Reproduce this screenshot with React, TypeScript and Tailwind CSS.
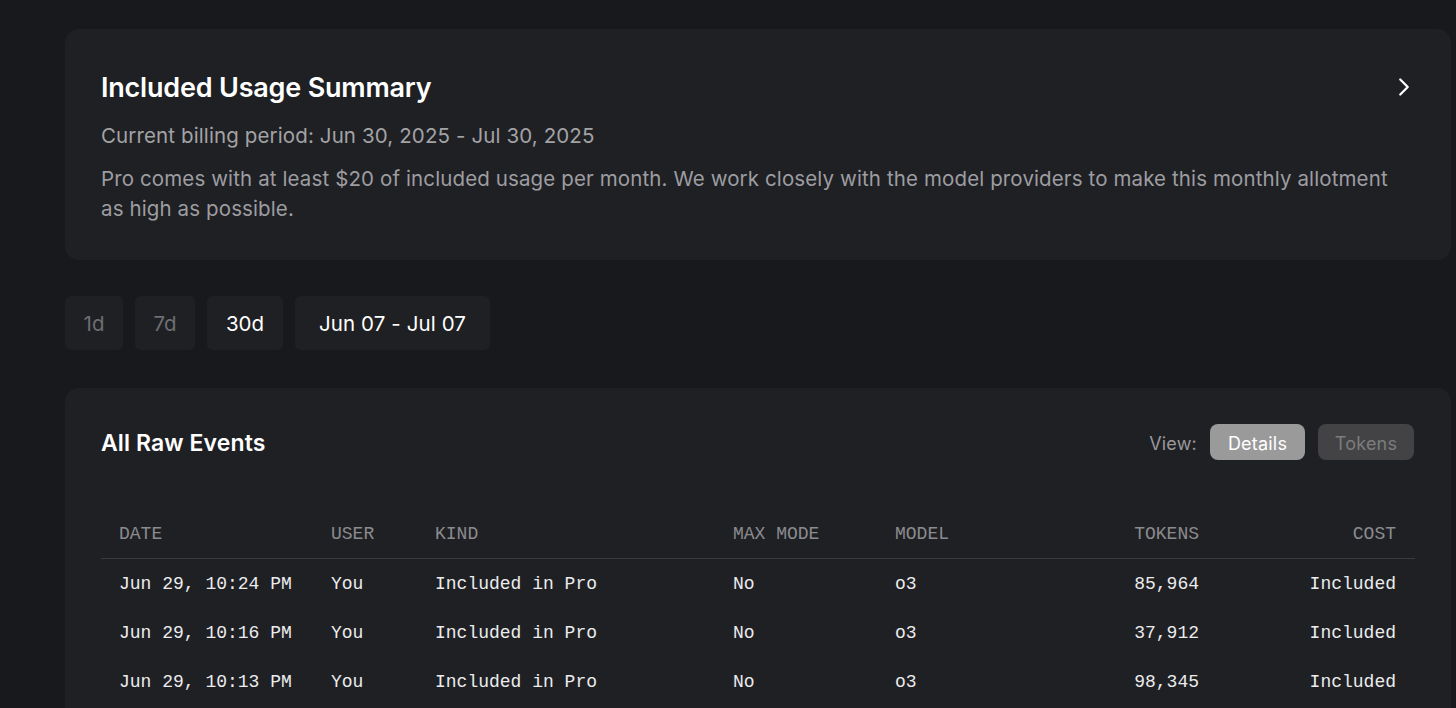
import React from "react";
import { ChevronRight } from "lucide-react";

const rows = [
  { date: "Jun 29, 10:24 PM", user: "You", kind: "Included in Pro", max: "No", model: "o3", tokens: "85,964", cost: "Included" },
  { date: "Jun 29, 10:16 PM", user: "You", kind: "Included in Pro", max: "No", model: "o3", tokens: "37,912", cost: "Included" },
  { date: "Jun 29, 10:13 PM", user: "You", kind: "Included in Pro", max: "No", model: "o3", tokens: "98,345", cost: "Included" },
];

export default function App() {
  const sans = { fontFamily: "Inter, 'Noto Sans', sans-serif" };
  return (
    <div className="min-h-[708px] w-[1456px] overflow-hidden bg-[#17191d] pl-[65px] pr-[5px] pt-[29px]" style={sans}>
      <div className="rounded-[14px] bg-[#1f2024] px-[36px] pt-[40px] pb-[36px]">
        <div className="flex h-[36px] items-center justify-between">
          <h1 className="pt-[2px] text-[27px] font-semibold leading-[36px] tracking-[-0.2px] text-white">Included Usage Summary</h1>
          <ChevronRight size={30} strokeWidth={1.8} className="mr-[-4px] text-white" />
        </div>
        <p className="mt-[16px] text-[20.5px] leading-[30px] tracking-[0.12px] text-[#a3a3a6]">Current billing period: Jun 30, 2025 - Jul 30, 2025</p>
        <p className="mt-[13px] pr-[20px] text-[20.5px] leading-[30px] tracking-[0.12px] text-[#9d9da1]">
          Pro comes with at least $20 of included usage per month. We work closely with the model providers to make this monthly allotment as high as possible.
        </p>
      </div>

      <div className="mt-[36px] flex gap-[12px]">
        <button className="flex h-[54px] w-[58px] items-center justify-center rounded-[6px] bg-[#1f2024] pt-[3px] text-[20.5px] text-[#6d6e72]">1d</button>
        <button className="flex h-[54px] w-[60px] items-center justify-center rounded-[6px] bg-[#1f2024] pt-[3px] text-[20.5px] text-[#6d6e72]">7d</button>
        <button className="flex h-[54px] w-[76px] items-center justify-center rounded-[6px] bg-[#1f2024] pt-[3px] text-[20.5px] text-white">30d</button>
        <button className="flex h-[54px] w-[195px] items-center justify-center rounded-[6px] bg-[#1f2024] pt-[3px] text-[20.5px] tracking-[0.1px] text-white">Jun 07 - Jul 07</button>
      </div>

      <div className="mt-[38px] rounded-[14px] bg-[#1f2024] px-[36px] pt-[36px] pb-[30px]">
        <div className="flex h-[36px] items-center justify-between">
          <h2 className="pt-[2px] text-[23px] font-semibold tracking-[0.1px] text-white">All Raw Events</h2>
          <div className="flex items-center gap-[13px] pr-[1px]">
            <span className="pt-[2px] text-[18px] tracking-[0.2px] text-[#98989c]">View:</span>
            <button className="h-[36px] w-[95px] rounded-[8px] bg-[#9a9a9b] pt-[2px] text-[18px] tracking-[0.2px] text-white">Details</button>
            <button className="h-[36px] w-[96px] rounded-[8px] bg-[#434345] pt-[2px] text-[18px] tracking-[0.2px] text-[#7c7c7e]">Tokens</button>
          </div>
        </div>

        <table className="mt-[50px] w-full table-fixed border-collapse text-[18px]" style={{ fontFamily: "'Liberation Mono', 'DejaVu Sans Mono', monospace" }}>
          <colgroup>
            <col className="w-[212px]" />
            <col className="w-[104px]" />
            <col className="w-[298px]" />
            <col className="w-[162px]" />
            <col className="w-[160px]" />
            <col />
            <col className="w-[198px]" />
          </colgroup>
          <thead>
            <tr className="h-[48px] border-b border-[#3a3b3f] text-left text-[#8b8b8f]">
              <th className="pl-[18px] pt-[2px] font-normal">DATE</th>
              <th className="pl-[18px] pt-[2px] font-normal">USER</th>
              <th className="pl-[18px] pt-[2px] font-normal">KIND</th>
              <th className="pl-[18px] pt-[2px] font-normal">MAX MODE</th>
              <th className="pl-[18px] pt-[2px] font-normal">MODEL</th>
              <th className="pr-[18px] pt-[2px] text-right font-normal">TOKENS</th>
              <th className="pr-[19px] pt-[2px] text-right font-normal">COST</th>
            </tr>
          </thead>
          <tbody className="text-[#ececee]">
            {rows.map((r, i) => (
              <tr key={i} className="h-[49px]">
                <td className="whitespace-nowrap pl-[18px] pt-[4px]">{r.date}</td>
                <td className="pl-[18px] pt-[4px]">{r.user}</td>
                <td className="whitespace-nowrap pl-[18px] pt-[4px]">{r.kind}</td>
                <td className="pl-[18px] pt-[4px]">{r.max}</td>
                <td className="pl-[18px] pt-[4px]">{r.model}</td>
                <td className="pr-[18px] pt-[4px] text-right">{r.tokens}</td>
                <td className="pr-[19px] pt-[4px] text-right">{r.cost}</td>
              </tr>
            ))}
          </tbody>
        </table>
      </div>
    </div>
  );
}
